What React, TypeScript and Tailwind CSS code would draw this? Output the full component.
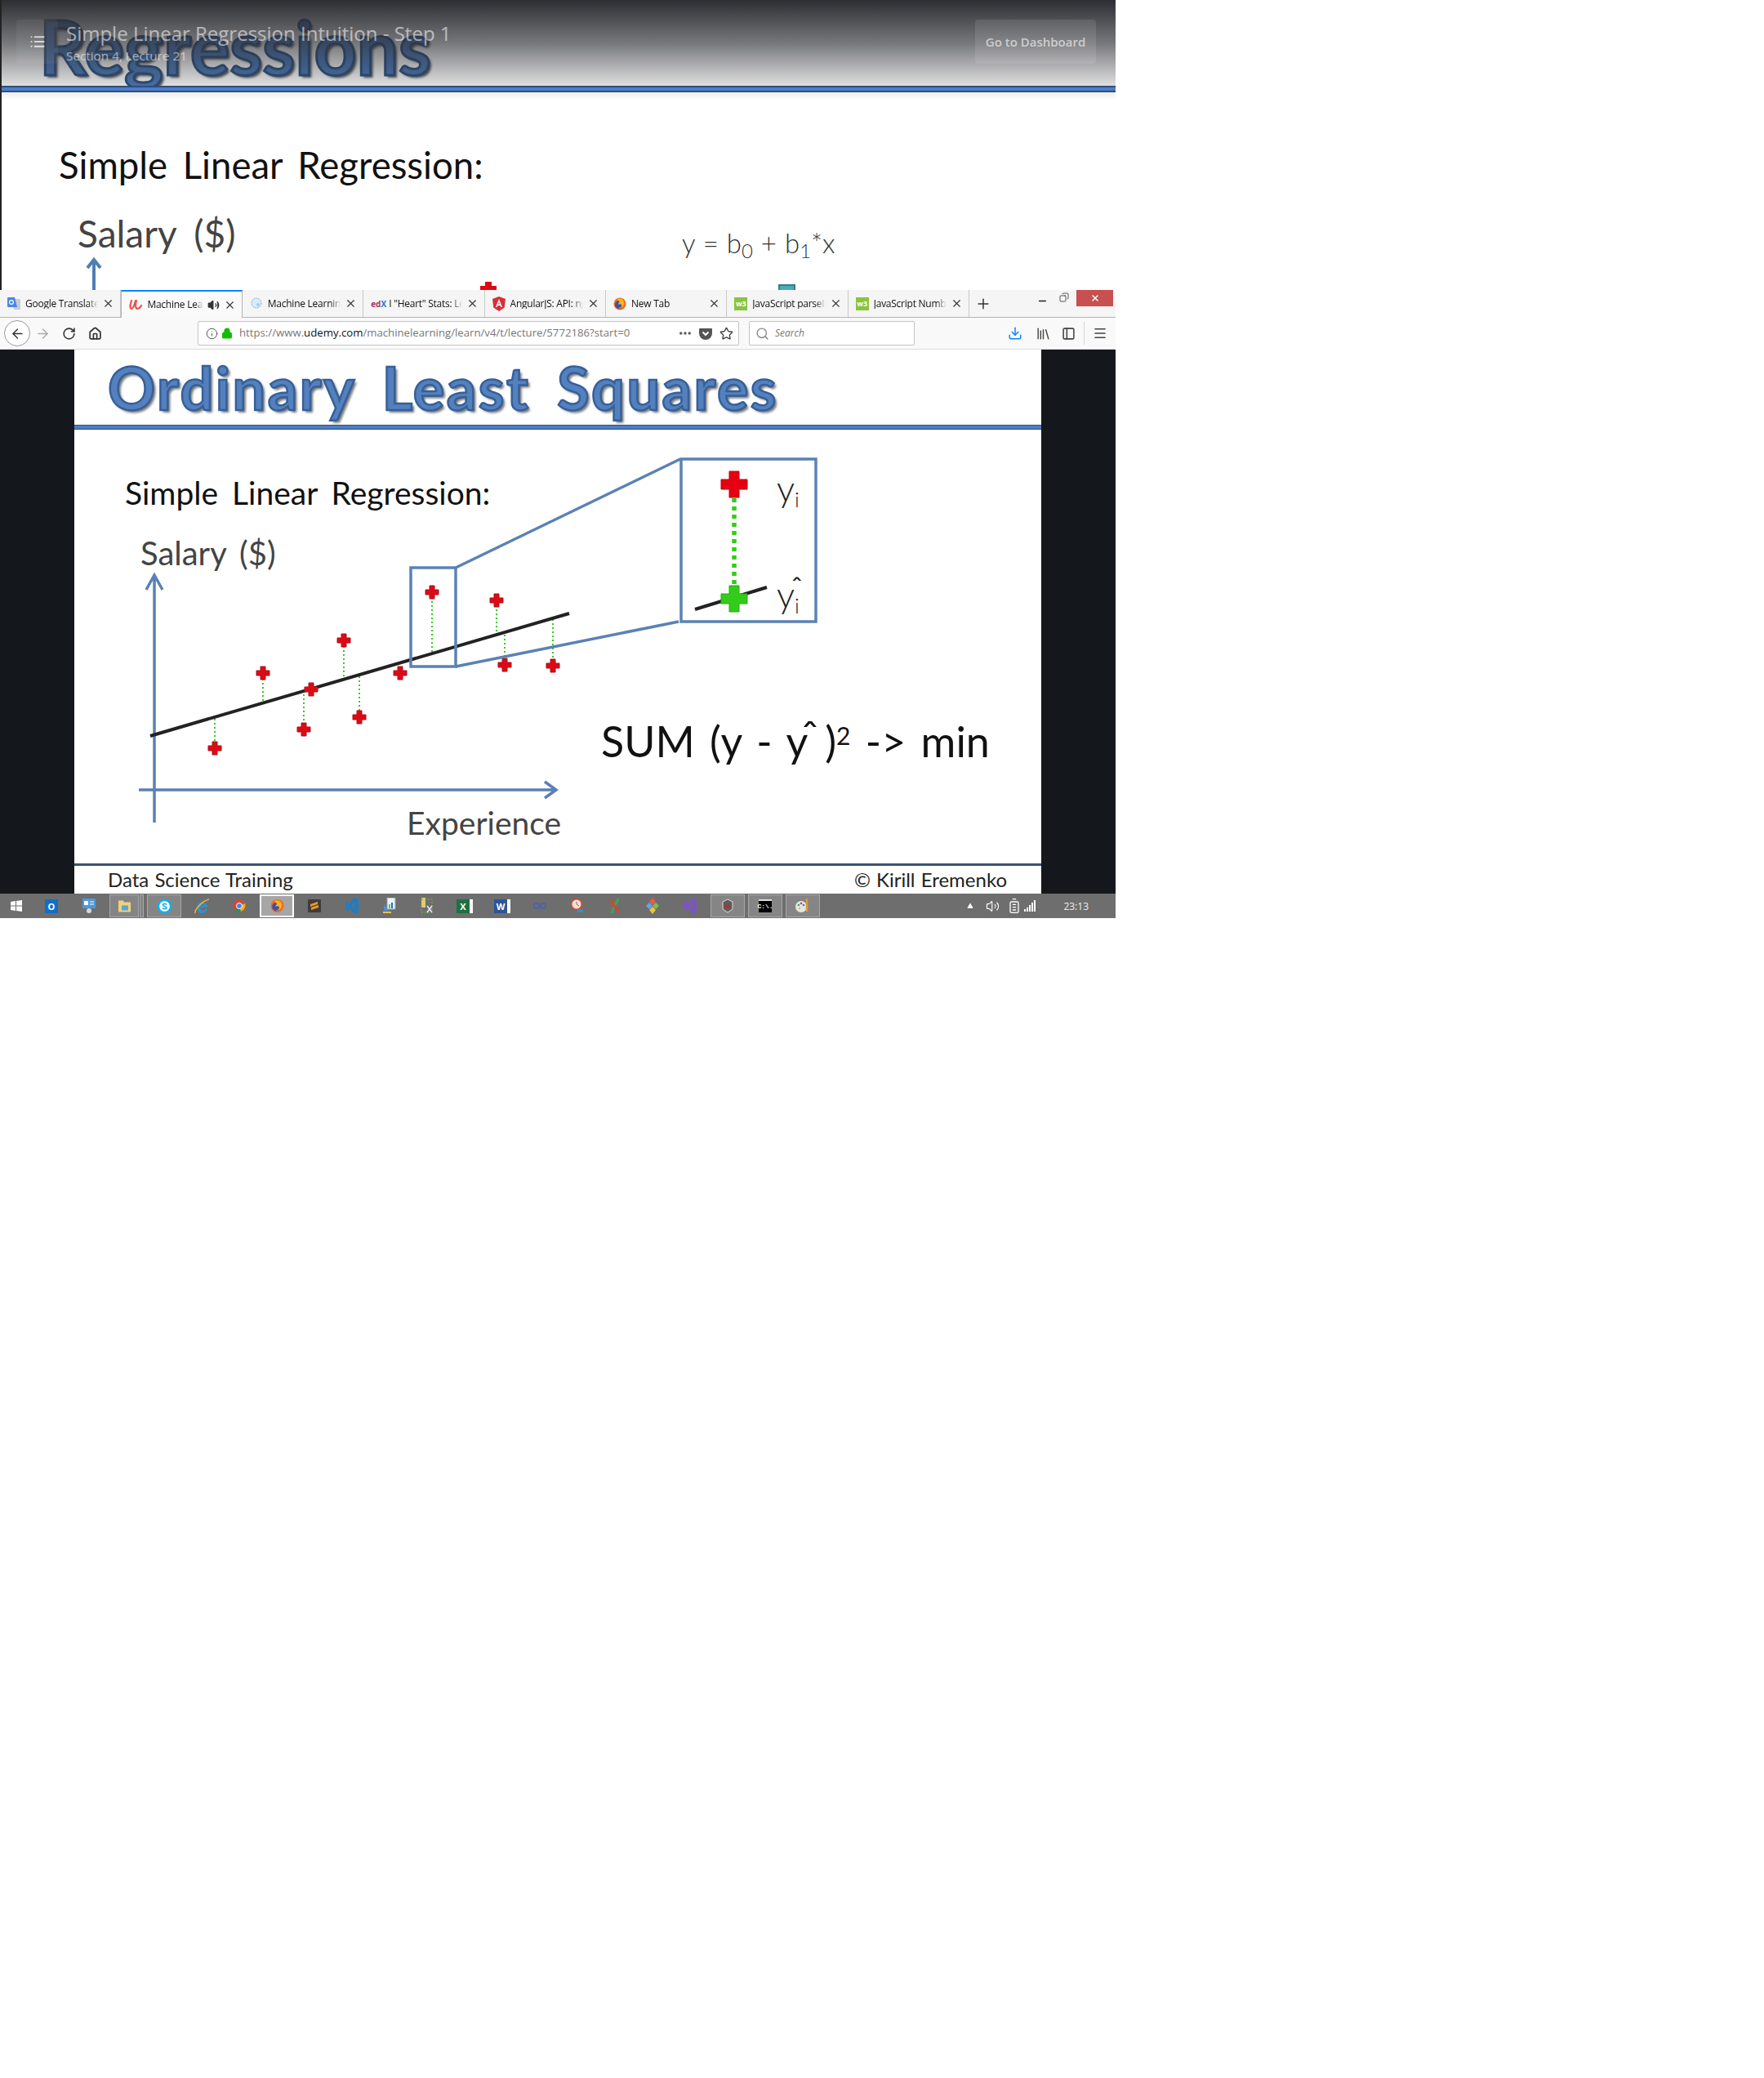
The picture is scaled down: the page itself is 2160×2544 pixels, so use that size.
import { ArrowLeft, ArrowRight, RotateCw, House, Info, Lock, Star, Search, Library, PanelLeft, Menu, X, Plus, Minus, Volume2, List, Ellipsis, Download, Copy, Triangle, BatteryFull } from 'lucide-react';
import type { ReactNode } from 'react';

const SLIDE = '"Lato", "Open Sans", sans-serif';
const UI = '"Open Sans", "Noto Sans", sans-serif';

const Cross = ({ x, y, w = 16, h = 16, t = 6, fill = '#dc0a14', stroke = '#b0101a' }: { x: number; y: number; w?: number; h?: number; t?: number; fill?: string; stroke?: string }) => {
  const a = t / 2, b = w / 2, c = h / 2;
  return (
    <path
      d={`M${x - a} ${y - c}h${t}v${c - a}h${b - a}v${t}h${a - b}v${c - a}h${-t}v${a - c}h${a - b}v${-t}h${b - a}z`}
      fill={fill}
      stroke={stroke}
      strokeWidth="1"
    />
  );
};

// --- tabs ---
const W3 = () => (
  <span className="w-4 h-4 bg-[#8ac33e] text-white text-[9px] font-bold flex items-center justify-center shrink-0 leading-none">w3</span>
);

const tabs: { title: string; icon: ReactNode; active?: boolean; sound?: boolean }[] = [
  {
    title: 'Google Translate',
    icon: (
      <svg width="16" height="18" viewBox="0 0 16 18"><path d="M6 3h9a1 1 0 0 1 1 1v11a1 1 0 0 1-1 1H8z" fill="#c8ccd2" /><path d="M1 1h8l3 12H1a1 1 0 0 1-1-1V2a1 1 0 0 1 1-1z" fill="#4a86e8" /><circle cx="5" cy="7" r="2.4" fill="none" stroke="#fff" strokeWidth="1.2" /></svg>
    ),
  },
  {
    title: 'Machine Learning A-Z',
    active: true,
    sound: true,
    icon: (
      <svg width="16" height="16" viewBox="0 0 16 16"><path d="M3 3c-1 4-3 9 0 10 2 .5 4-6 5-10M9 3c-1 4-2 9 1 10 2 0 4-2 5-4" fill="none" stroke="#ec5252" strokeWidth="2.2" strokeLinecap="round" /></svg>
    ),
  },
  {
    title: 'Machine Learning',
    icon: (
      <svg width="16" height="16" viewBox="0 0 16 16"><circle cx="8" cy="7" r="6" fill="#dcebf7" stroke="#7fb0dc" strokeDasharray="2 1" /><circle cx="10" cy="9" r="2" fill="#a9cbe8" /></svg>
    ),
  },
  {
    title: 'I "Heart" Stats: Lecture',
    icon: <span className="w-4 text-[10px] font-bold leading-none shrink-0"><span className="text-[#a6336a]">ed</span><span className="text-[#2a73cc]">X</span></span>,
  },
  {
    title: 'AngularJS: API: ngModel',
    icon: (
      <svg width="16" height="18" viewBox="0 0 16 18"><path d="M8 0l8 3-1.3 10.500L8 18l-6.700-4.500L0 3z" fill="#d6303a" /><path d="M8 3l-4 10h1.600l.8-2h3.200l.8 2H12zM7 9.500l1-2.700 1 2.700z" fill="#fff" /></svg>
    ),
  },
  {
    title: 'New Tab',
    icon: (
      <svg width="16" height="16" viewBox="0 0 16 16"><circle cx="8" cy="8" r="7.500" fill="#f26a1b" /><circle cx="7" cy="9" r="5" fill="#3c4fb0" /><path d="M5 2c6-2 9 3 8 7-1 4-5 5-7 4 3 0 5-2 4-4-1-1-3-1-4 0 0-2 1-3 2-3-1-1-2-2-3-4z" fill="#fbb31c" /></svg>
    ),
  },
  { title: 'JavaScript parseInt() Function', icon: <W3 /> },
  { title: 'JavaScript Number() Function', icon: <W3 /> },
];

// --- taskbar ---
const Square = ({ bg, fg, children }: { bg: string; fg?: string; children?: ReactNode }) => (
  <span className="w-4 h-[17px] flex items-center justify-center text-[11px] font-bold leading-none" style={{ background: bg, color: fg ?? '#fff' }}>{children}</span>
);

const taskIcons: { icon: ReactNode; box?: boolean; active?: boolean; split?: boolean; w?: string }[] = [
  {
    w: 'w-[40px]',
    icon: <svg width="14" height="14" viewBox="0 0 14 14" fill="#fff"><path d="M0 2l6-1v5.500H0zM7 1l7-1v6.500H7zM0 7.500h6V13l-6-1zM7 7.500h7V14l-7-1z" /></svg>,
  },
  { icon: <Square bg="#0f6fc6">O</Square> },
  { icon: <svg width="16" height="18" viewBox="0 0 16 18"><rect width="16" height="12" fill="#4d9ad9" /><rect x="2" y="3" width="5" height="5" fill="#fff" /><path d="M9 4h5M9 7h5" stroke="#fff" /><circle cx="8" cy="15" r="3" fill="#d8d8d8" /></svg> },
  { box: true, split: true, icon: <svg width="17" height="18" viewBox="0 0 17 17"><path d="M1 2h6l1 2h8v12H1z" fill="#f0d27a" /><rect x="5" y="8" width="8" height="6" fill="#5aa6d6" /></svg> },
  { box: true, icon: <svg width="19" height="19" viewBox="0 0 18 18"><circle cx="9" cy="9" r="8.500" fill="#12aef0" /><circle cx="9" cy="9" r="6" fill="#fff" /><path d="M11.500 7C10 5.500 6.500 6 7 7.500S11.500 9.500 11.500 11 8 12.500 6.500 11" fill="none" stroke="#12aef0" strokeWidth="1.500" /></svg> },
  { icon: <svg width="19" height="19" viewBox="0 0 18 18"><path d="M3 10a6 6 0 1 1 12 0H7a3 3 0 0 0 6 2h2a6 6 0 0 1-12-2zm4-2h5a3 3 0 0 0-5 0z" fill="#2a94d6" /><path d="M1 17c-1-3 6-13 16-16" fill="none" stroke="#f2b33d" strokeWidth="1.400" /></svg> },
  { icon: <svg width="16" height="18" viewBox="0 0 16 16"><circle cx="8" cy="8" r="7.500" fill="#db4437" /><path d="M8 8L2 15a8 8 0 0 0 8 0z" fill="#0f9d58" /><path d="M8 8l7-3a8 8 0 0 1-5 10z" fill="#f4b400" /><circle cx="8" cy="8" r="3.500" fill="#4285f4" stroke="#fff" /></svg> },
  { box: true, active: true, icon: <svg width="17" height="20" viewBox="0 0 16 16"><circle cx="8" cy="8" r="7.500" fill="#f26a1b" /><circle cx="7" cy="9" r="5" fill="#3c4fb0" /><path d="M5 2c6-2 9 3 8 7-1 4-5 5-7 4 3 0 5-2 4-4-1-1-3-1-4 0 0-2 1-3 2-3-1-1-2-2-3-4z" fill="#fbb31c" /></svg> },
  { icon: <svg width="16" height="16" viewBox="0 0 16 16"><rect width="16" height="16" rx="1" fill="#3d3d3d" /><path d="M3 6l9-3v3L3 9zM13 10l-9 3v-3l9-3z" fill="#f29a1f" /></svg> },
  { icon: <svg width="16" height="20" viewBox="0 0 16 20"><path d="M11 0l5 2v16l-5 2-6-7-3 3-2-1V5l2-1 3 3zM11 6l-4 4 4 4zM2 8v4l2-2z" fill="#1f7cc4" /></svg> },
  { icon: <svg width="16" height="20" viewBox="0 0 16 20"><rect x="5" y="0" width="10" height="14" fill="#eef3f7" stroke="#8aa" /><rect x="7" y="8" width="2" height="5" fill="#3c8" /><rect x="10" y="6" width="2" height="7" fill="#36c" /><path d="M1 8v8l6-0z" fill="#5a8ad0" /><rect x="0" y="17" width="10" height="2" fill="#e8c050" /></svg> },
  { icon: <svg width="16" height="20" viewBox="0 0 16 20"><rect x="1" y="0" width="5" height="12" fill="#e6c874" /><rect x="1" y="2" width="13" height="16" fill="none" stroke="#5dc83c" strokeDasharray="2 2" /><path d="M8 18l6-8M8 10l6 8" stroke="#eee" strokeWidth="1.500" /></svg> },
  { icon: <span className="flex"><Square bg="#1e7145">X</Square><span className="w-1 h-[17px] bg-white" /></span> },
  { icon: <span className="flex"><Square bg="#2b5797">W</Square><span className="w-1 h-[17px] bg-white" /></span> },
  { icon: <svg width="16" height="10" viewBox="0 0 16 10" fill="none" stroke="#4a5fb0" strokeWidth="1.500"><circle cx="4" cy="5" r="3.200" /><circle cx="12" cy="5" r="3.200" /></svg> },
  { icon: <svg width="16" height="18" viewBox="0 0 16 18"><circle cx="7" cy="7" r="6.500" fill="#e9e4df" stroke="#d24a32" strokeWidth="2" /><path d="M7 4v3l3 2" stroke="#d24a32" fill="none" /><rect x="8" y="13" width="7" height="4" fill="#2a94c6" /></svg> },
  { icon: <svg width="14" height="20" viewBox="0 0 14 20" fill="none" strokeWidth="3"><path d="M11 1C9 8 5 10 3 19" stroke="#3aa655" /><path d="M2 3c2 6 7 9 10 15" stroke="#d8442e" /></svg> },
  { icon: <svg width="16" height="20" viewBox="0 0 16 20"><path d="M8 0l4 5-4 4-4-4z" fill="#e35d4a" /><path d="M0 10l4-4 4 4-4 4z" fill="#5aa8e6" /><path d="M16 10l-4-4-4 4 4 4z" fill="#7ac04a" /><path d="M8 20l-4-5 4-4 4 4z" fill="#f2c23d" /></svg> },
  { icon: <svg width="16" height="20" viewBox="0 0 16 20"><path d="M11 0l5 2v16l-5 2-6-7-3 3-2-1V5l2-1 3 3zM11 6l-4 4 4 4zM2 8v4l2-2z" fill="#7a55c0" /></svg> },
  { box: true, icon: <svg width="16" height="18" viewBox="0 0 16 18"><path d="M8 1l6 3v9l-6 4-6-4V4z" fill="#5c5c5c" stroke="#ddd" /><path d="M4 10c2-3 6-3 8-2-1 3-4 4-8 2z" fill="#d8202a" /></svg> },
  { box: true, icon: <span className="w-4 h-4 bg-black text-white text-[8px] font-bold font-mono flex items-center justify-center leading-none border-t-2 border-[#ddd]">C:\.</span> },
  { box: true, icon: <svg width="18" height="18" viewBox="0 0 18 18"><ellipse cx="7" cy="10" rx="7" ry="7" fill="#dfe6ea" /><circle cx="4" cy="8" r="1.300" fill="#3aa655" /><circle cx="7" cy="6" r="1.300" fill="#d8442e" /><circle cx="10" cy="8" r="1.300" fill="#3a7fd0" /><circle cx="5" cy="12" r="1.300" fill="#e6b93a" /><path d="M14 0v16" stroke="#e8952e" strokeWidth="2.500" /></svg> },
];

const dotted = [
  [263, 880, 908], [322, 858, 816], [372, 850, 885], [421, 828, 776], [440, 828, 870],
  [529, 798, 717], [608, 773, 727], [618, 777, 806], [677, 758, 807],
];
const points = [
  [263, 916], [322, 824], [372, 893], [381, 844], [421, 784], [440, 878],
  [490, 824], [529, 725], [608, 735], [618, 814], [677, 815],
];

const App = () => {
  return (
    <div className="w-[1366px] h-[2544px] bg-white overflow-hidden" style={{ fontFamily: UI }}>

      {/* VIDEO FRAME BEHIND THE BROWSER */}
      <div className="relative h-[355px] border-l-2 border-[#222] overflow-hidden" style={{ fontFamily: SLIDE }}>
        <span className="absolute left-[46px] top-[7px] text-[91px] leading-[100px] font-bold text-[#4a78b6] [-webkit-text-stroke:3px_#2b5082] [text-shadow:3px_3px_3px_#555]">Regressions</span>
        <div className="absolute left-[-2px] right-0 top-[105px] h-[8px] bg-[#4f7cc4] border-y-2 border-[#2c4f7c]" />
        <div className="absolute left-0 right-0 top-[113px] h-[10px] bg-gradient-to-b from-[#ececec] to-white" />
        <span className="absolute left-[70px] top-[179px] text-[45.500px] leading-none text-[#111] [word-spacing:7px]">Simple Linear Regression:</span>
        <span className="absolute left-[93px] top-[263px] text-[46px] leading-none text-[#444] [word-spacing:10px]">Salary ($)</span>
        <span className="absolute left-[833px] top-[281px] text-[33px] leading-none text-[#333] font-light [word-spacing:1px]">
          y = b<sub className="text-[24px]">0</sub> + b<sub className="text-[24px]">1</sub>*x
        </span>
        <svg className="absolute left-[98px] top-[314px]" width="30" height="42" viewBox="0 0 30 42" fill="none" stroke="#4f7db4" strokeWidth="4">
          <path d="M15 4v38M7 14l8-10 8 10" />
        </svg>
        <div className="absolute left-[586px] top-[345px] w-[20px] h-[12px]">
          <div className="mx-auto w-[8px] h-[5px] bg-[#dc0a14]" />
          <div className="h-[7px] bg-[#dc0a14]" />
        </div>
        <div className="absolute left-[951px] top-[348px] w-[21px] h-[8px] bg-[#4ea9b5] border-2 border-b-0 border-[#2f7f8c]" />

        {/* course bar overlay */}
        <div className="absolute left-[-2px] w-[1366px] top-0 h-[105px] bg-gradient-to-b from-[#2d2e33] via-[#2d2e33]/65 to-[#2d2e33]/15 flex items-start justify-between pt-[24px] pl-[20px] pr-[24px]" style={{ fontFamily: UI }}>
          <div className="flex items-start">
            <div className="w-[51px] h-[54px] bg-white/5 rounded-sm flex items-center justify-center">
              <List className="w-[20px] h-[20px] text-white/70" strokeWidth={2.5} />
            </div>
            <div className="ml-[10px] mt-[1px] text-white/55">
              <div className="text-[24px] leading-[32px]">Simple Linear Regression Intuition - Step 1</div>
              <div className="text-[15.300px] leading-[22px]">Section 4, Lecture 21</div>
            </div>
          </div>
          <div className="w-[148px] h-[54px] bg-white/10 rounded-sm flex items-center justify-center text-[15px] font-semibold text-white/60">Go to Dashboard</div>
        </div>
      </div>

      {/* TAB BAR */}
      <div className="h-[34px] bg-[#f5f5f5] border-b border-[#b4b4b4] flex items-stretch relative">
        {tabs.map((t) => (
          <div
            key={t.title}
            className={`w-[148.400px] flex items-center pl-[8px] pr-[7px] gap-[5px] shrink-0 ${t.active ? 'bg-[#fafafa] border-t-2 border-[#0a84ff] border-x border-x-[#b4b4b4] h-[34px] w-[147px]' : 'border-r border-[#c8c8c8]'}`}
          >
            <span className="w-[18px] flex justify-center shrink-0">{t.icon}</span>
            <span className="flex-1 text-[12px] tracking-[-0.25px] text-[#111] whitespace-nowrap overflow-hidden leading-none [mask-image:linear-gradient(to_right,black_86%,transparent)]">{t.title}</span>
            {t.sound && <Volume2 className="w-[15px] h-[15px] text-[#333] shrink-0" fill="#333" />}
            <X className="w-[15px] h-[15px] text-[#333] shrink-0" strokeWidth={1.8} />
          </div>
        ))}
        <Plus className="w-[20px] h-[20px] text-[#333] ml-[7px] self-center" strokeWidth={1.8} />
        <div className="ml-auto flex items-start pr-[3px]">
          <Minus className="w-[13px] h-[13px] text-[#222] mt-[7px] mr-[14px]" strokeWidth={3} />
          <Copy className="w-[12px] h-[12px] text-[#222] mt-[3px] mr-[9px] -scale-x-100" strokeWidth={1.5} />
          <div className="w-[45px] h-[20px] bg-[#c75050] flex items-center justify-center">
            <X className="w-[12px] h-[12px] text-white" strokeWidth={3} />
          </div>
        </div>
      </div>

      {/* TOOLBAR */}
      <div className="h-[39px] bg-[#f9f9f9] border-b border-[#dcdcdc] flex items-center relative">
        <div className="ml-[5px] w-[32px] h-[32px] rounded-full border border-[#9a9a9a] bg-white flex items-center justify-center">
          <ArrowLeft className="w-[19px] h-[19px] text-[#333]" strokeWidth={1.8} />
        </div>
        <ArrowRight className="ml-[6px] w-[19px] h-[19px] text-[#aaa]" strokeWidth={1.8} />
        <RotateCw className="ml-[14px] w-[17px] h-[17px] text-[#333]" strokeWidth={2.2} />
        <House className="ml-[15px] w-[17px] h-[17px] text-[#333]" strokeWidth={2.4} />

        <div className="ml-[117px] w-[663px] h-[30px] bg-white border border-[#c4c4c4] rounded-[2px] flex items-center pl-[9px] pr-[6px]">
          <Info className="w-[15px] h-[15px] text-[#555] shrink-0" strokeWidth={1.6} />
          <Lock className="ml-[4px] w-[14px] h-[14px] text-[#12bc00] shrink-0" fill="#12bc00" strokeWidth={2.4} />
          <span className="ml-[8px] text-[13.200px] text-[#777] whitespace-nowrap">https://www.<span className="text-[#111]">udemy.com</span>/machinelearning/learn/v4/t/lecture/5772186?start=0</span>
          <Ellipsis className="ml-auto w-[18px] h-[18px] text-[#555]" strokeWidth={2.6} />
          <svg className="ml-[8px]" width="16" height="16" viewBox="0 0 16 16"><path d="M1 2h14a1 1 0 0 1 1 1v5a8 8 0 0 1-16 0V3a1 1 0 0 1 1-1z" fill="#555" /><path d="M4.500 6.500L8 10l3.500-3.500" fill="none" stroke="#fff" strokeWidth="2" /></svg>
          <Star className="ml-[9px] w-[17px] h-[17px] text-[#444]" strokeWidth={2} />
        </div>

        <div className="ml-[12px] w-[203px] h-[30px] bg-white border border-[#c4c4c4] rounded-[2px] flex items-center pl-[7px]">
          <Search className="w-[17px] h-[17px] text-[#888]" strokeWidth={2} />
          <span className="ml-[7px] text-[12px] italic text-[#777]">Search</span>
        </div>

        <Download className="ml-[114px] w-[18px] h-[18px] text-[#0a84ff]" strokeWidth={2} />
        <Library className="ml-[16px] w-[19px] h-[19px] text-[#444]" strokeWidth={1.8} />
        <PanelLeft className="ml-[13px] w-[17px] h-[17px] text-[#444]" strokeWidth={2.2} />
        <div className="ml-[10px] w-px h-[28px] bg-[#d4d4d4]" />
        <Menu className="ml-[10px] w-[18px] h-[18px] text-[#444]" strokeWidth={2.2} />
      </div>

      {/* VIDEO */}
      <div className="h-[666px] flex bg-[#14181c]">
        <div className="w-[91px] shrink-0" />
        <div className="w-[1184px] bg-white flex flex-col" style={{ fontFamily: SLIDE }}>
          <div className="h-[92px] pl-[41px] flex items-center">
            <span className="text-[72px] leading-none font-bold tracking-[2.500px] text-[#5480bd] [-webkit-text-stroke:2.500px_#35609a] [text-shadow:3px_3px_3px_#777] [word-spacing:13px]">Ordinary Least Squares</span>
          </div>
          <div className="h-[6px] bg-[#4f7cc4] border-y border-[#2c4f7c]" />

          <div className="flex-1 relative">
            <svg className="absolute inset-0 w-full h-full" viewBox="91 526 1184 531" fill="none">
              {/* axes */}
              <g stroke="#5b80b2" strokeWidth="3.500">
                <path d="M189 1007V705M179 722l10-18 10 18" />
                <path d="M170 967H679M667 957l14 10-14 10" />
              </g>
              {/* residuals */}
              {dotted.map(([x, y1, y2]) => (
                <line key={x} x1={x} x2={x} y1={y1} y2={y2} stroke="#3cc82a" strokeWidth="2" strokeDasharray="2 3" />
              ))}
              <line x1="184" y1="901" x2="697" y2="751" stroke="#222" strokeWidth="4" />
              {points.map(([x, y]) => <Cross key={x} x={x} y={y} />)}
              {/* zoom boxes */}
              <g stroke="#5a82b4" strokeWidth="3.500">
                <rect x="503" y="695" width="55" height="121" />
                <rect x="834" y="562" width="165" height="199" />
                <path d="M558 695L833 562M558 816L831 761" />
              </g>
              <line x1="899" y1="610" x2="899" y2="716" stroke="#33cc1a" strokeWidth="5.500" strokeDasharray="5 5" />
              <line x1="851" y1="746" x2="939" y2="719" stroke="#222" strokeWidth="4" />
              <Cross x={899} y={593} w={32} h={32} t={12} fill="#e60012" stroke="#c00010" />
              <Cross x={899} y={733} w={32} h={32} t={12} fill="#33cc1a" stroke="#2aa816" />
            </svg>

            <span className="absolute left-[62px] top-[58px] text-[39px] leading-none text-[#111] [word-spacing:7px]">Simple Linear Regression:</span>
            <span className="absolute left-[81px] top-[131px] text-[40px] leading-none text-[#444] [word-spacing:6px]">Salary ($)</span>
            <span className="absolute left-[407px] top-[462px] text-[39px] leading-none text-[#444]">Experience</span>
            <span className="absolute left-[645px] top-[355px] text-[52px] leading-none text-[#111] whitespace-pre [word-spacing:5px]">SUM (y - y<span className="relative -left-[8px] -top-[6px]">ˆ</span>)<sup className="text-[30px]">2</sup> -&gt; min</span>
            <span className="absolute left-[860px] top-[49px] text-[44px] leading-none text-[#222] font-light">y<sub className="text-[26px]">i</sub></span>
            <span className="absolute left-[860px] top-[179px] text-[44px] leading-none text-[#222] font-light">y<sub className="text-[26px]">i</sub><span className="absolute left-[18px] -top-[4px] text-[34px] font-normal">ˆ</span></span>
          </div>

          <div className="h-[37px] border-t-[3px] border-[#3b5472] flex items-center justify-between pl-[41px] pr-[42px] text-[24px] text-[#222] leading-none [word-spacing:1px]">
            <span>Data Science Training</span>
            <span>© Kirill Eremenko</span>
          </div>
        </div>
        <div className="flex-1" />
      </div>

      {/* TASKBAR */}
      <div className="h-[30px] bg-[#6e6e6e] flex items-stretch relative">
        {taskIcons.map((t, i) => (
          <div key={i} className={`${t.w ?? 'w-[46px]'} flex items-center justify-center gap-px py-px px-[2px]`}>
            <div className={`flex-1 h-full flex items-center justify-center ${t.active ? 'bg-[#a6a6a6] border-2 border-white' : t.box ? 'bg-[#858585] border border-[#a8a8a8]' : ''}`}>
              {t.icon}
            </div>
            {t.split && <div className="w-[5px] h-full bg-[#858585] border border-[#a8a8a8]" />}
          </div>
        ))}
        <div className="ml-auto flex items-center pr-[33px] text-white">
          <Triangle className="w-[8px] h-[8px]" fill="#fff" strokeWidth={0} />
          <Volume2 className="ml-[15px] w-[17px] h-[17px]" strokeWidth={1.6} />
          <BatteryFull className="ml-[8px] w-[20px] h-[20px] -rotate-90" strokeWidth={1.6} />
          <svg className="ml-[2px]" width="16" height="14" viewBox="0 0 16 14" fill="#fff"><rect x="0" y="11" width="2" height="3" /><rect x="3" y="9" width="2" height="5" /><rect x="6" y="6" width="2" height="8" /><rect x="9" y="3" width="2" height="11" /><rect x="12" y="0" width="2" height="14" /></svg>
          <span className="ml-[32px] mt-[1px] text-[12px] text-[#eee]">23:13</span>
        </div>
      </div>
    </div>
  );
};

export default App;
